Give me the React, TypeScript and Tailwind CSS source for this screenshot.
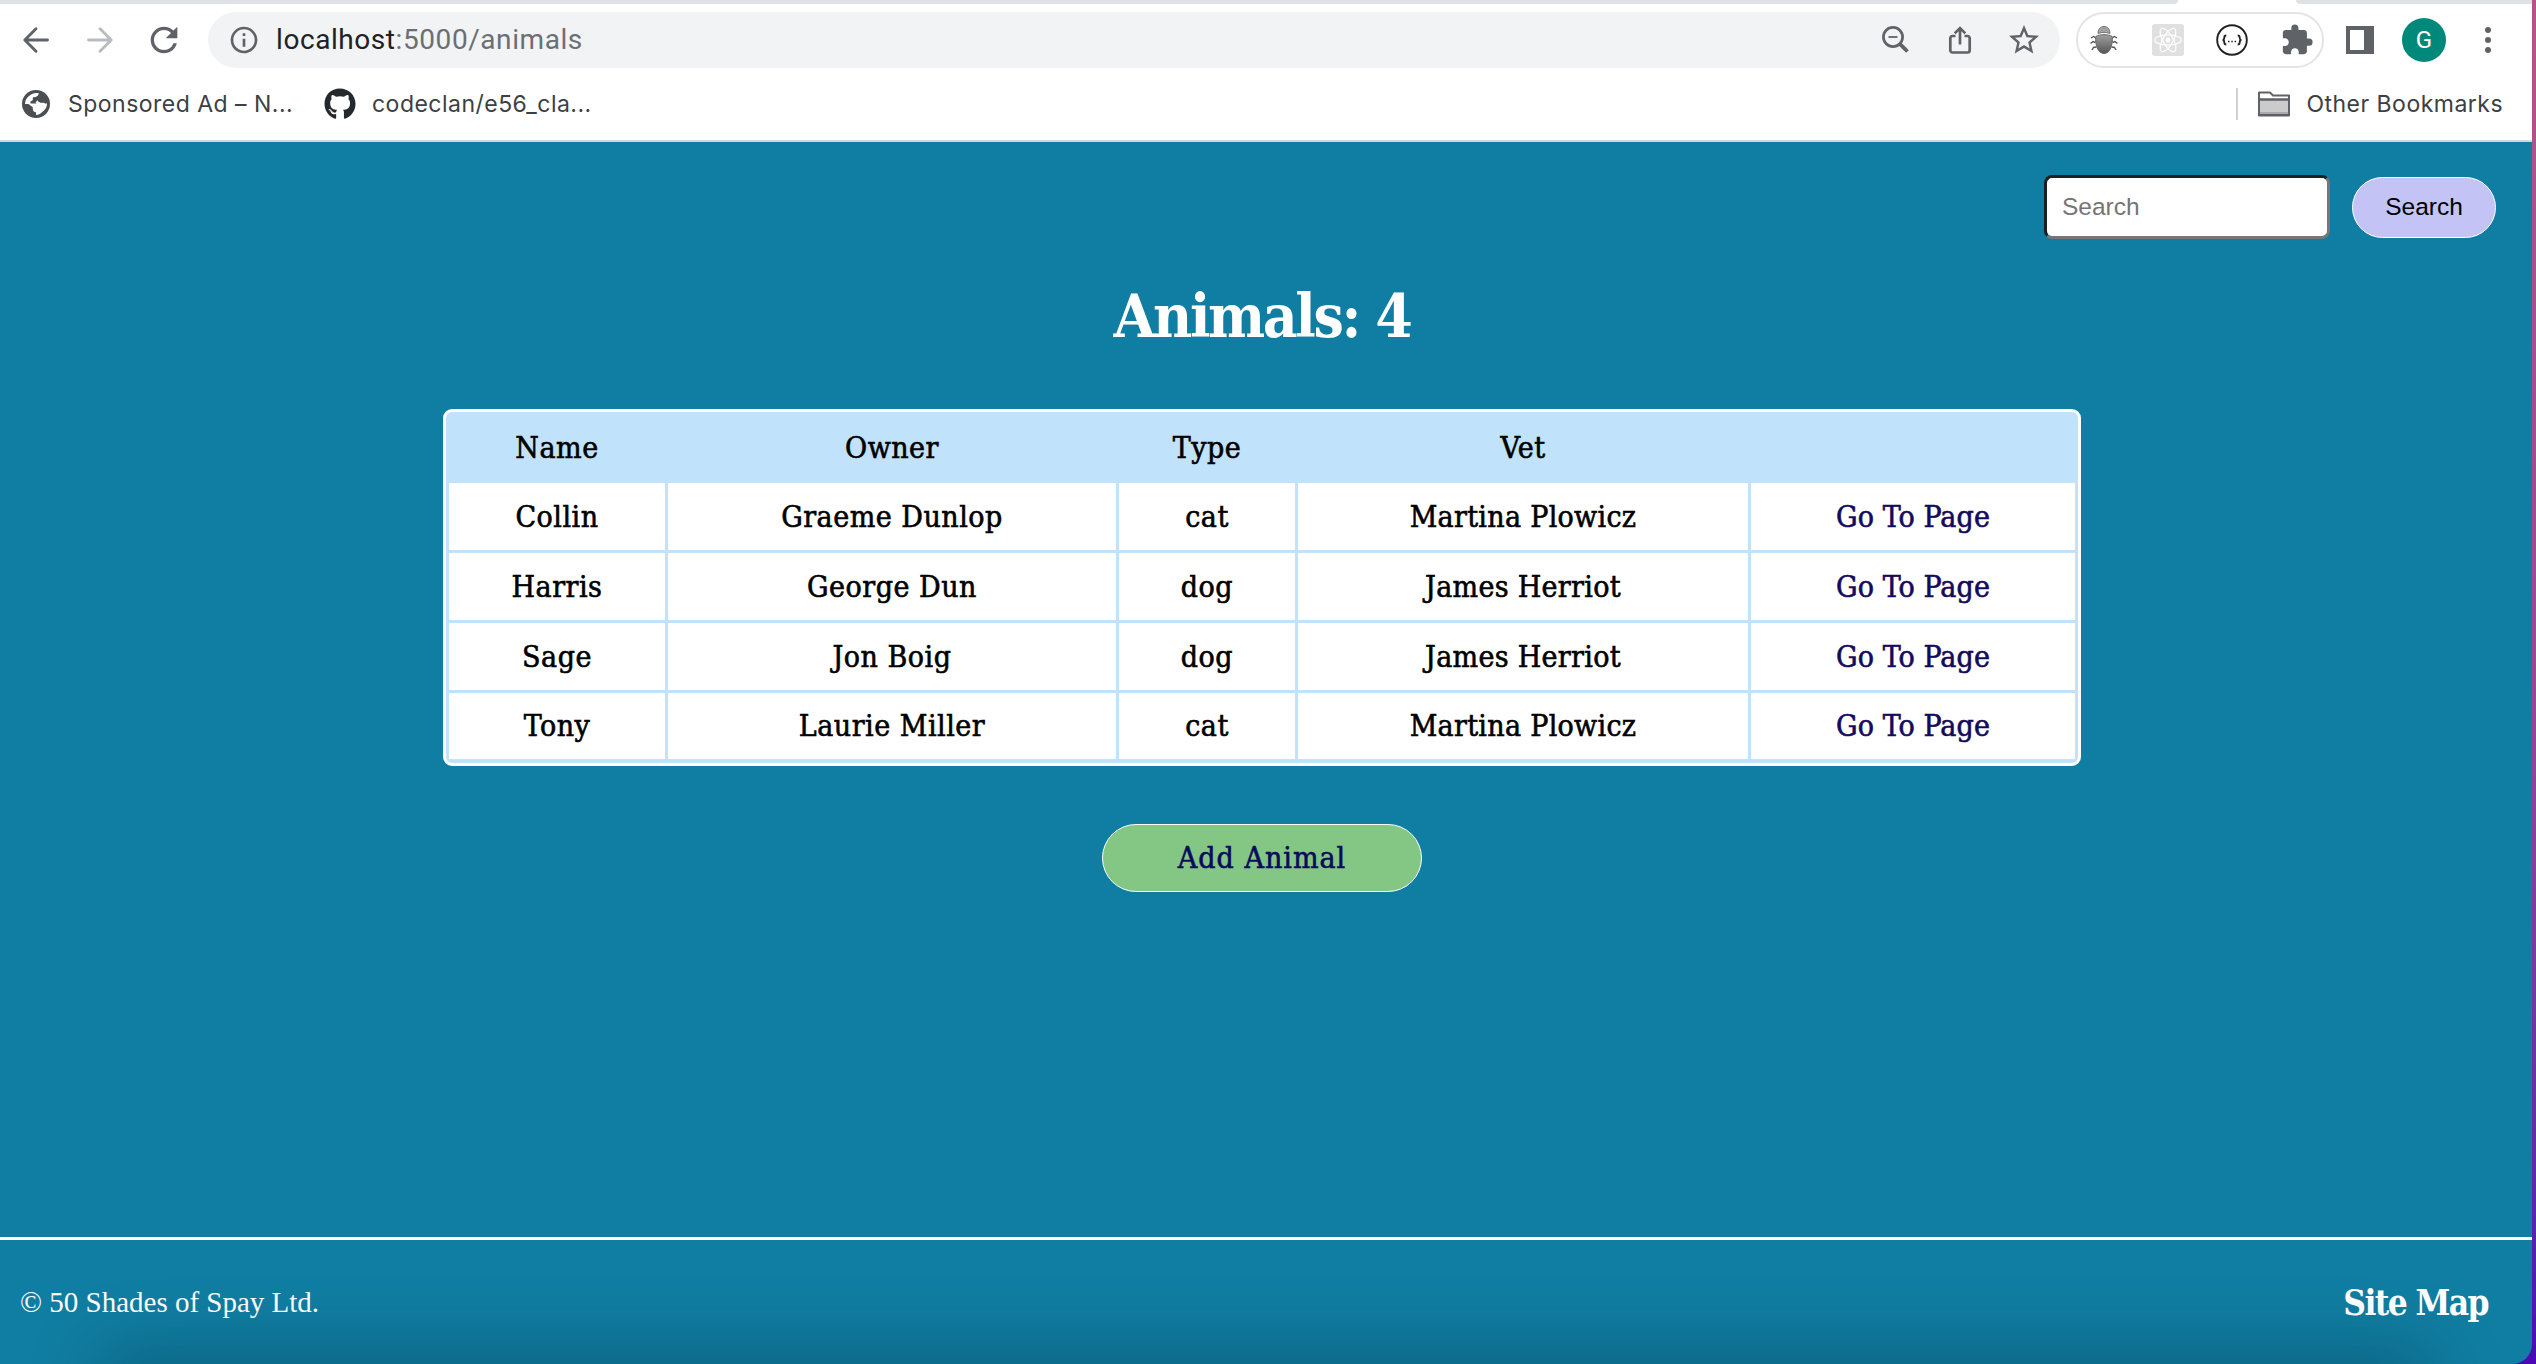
import { MdExtension, MdInfoOutline, MdRefresh, MdStarBorder } from 'react-icons/md';
import { FaGithub, FaReact } from 'react-icons/fa';

type Animal = { name: string; owner: string; type: string; vet: string };

const animals: Animal[] = [
  { name: 'Collin', owner: 'Graeme Dunlop', type: 'cat', vet: 'Martina Plowicz' },
  { name: 'Harris', owner: 'George Dun', type: 'dog', vet: 'James Herriot' },
  { name: 'Sage', owner: 'Jon Boig', type: 'dog', vet: 'James Herriot' },
  { name: 'Tony', owner: 'Laurie Miller', type: 'cat', vet: 'Martina Plowicz' },
];

const slab = "font-['DejaVu_Serif_Condensed','DejaVu_Serif',serif]";
const cellText = 'text-[30px] leading-none tracking-[0.5px] [-webkit-text-stroke:0.6px]';

function Arrow({ flip = false, color }: { flip?: boolean; color: string }) {
  return (
    <svg className={flip ? 'h-8 w-8 rotate-180' : 'h-8 w-8'} viewBox="0 0 32 32" fill="none" stroke={color} strokeWidth="2.9" strokeLinecap="round" strokeLinejoin="round">
      <path d="M27.5 16H5M16 4.8 4.8 16 16 27.2" />
    </svg>
  );
}

function GlobeIcon() {
  return (
    <svg className="h-7 w-7" viewBox="0 0 28 28">
      <circle cx="14" cy="14" r="14" fill="#4b4f53" />
      <path fill="#fff" d="M3 14C3.200 8.200 8 3.600 14.500 3.100L16.800 3.300C16.600 5.800 15.500 7 13.500 7.100L11 7.300C10.600 8.800 11.200 9.500 10.400 10.400L8.400 11.400L8.500 13.500H15.200C17 13.500 18 14.500 18 16.200V17.300C19.700 17.300 20.500 18.100 20.500 19.500V21.800C18.800 23.800 16.700 24.800 14 25V22.200C12 22.200 10.800 21 10.800 19V17.300L6.500 14Z" />
      <path fill="#fff" d="M20.500 21.800C23.500 19.500 25.200 16.600 25 12.900C24 13.700 22.600 13.500 21.700 12.600L19.500 12.800C17.600 12.800 16.200 11.800 15.500 10.300L13.500 12.500L17.500 17.500Z" />
      <path fill="#4b4f53" d="M17.200 4.500L24 9.500L25 12.800C24 13.700 22.600 13.500 21.700 12.500H19.300C17.300 12.500 16 11.200 16 9.400C16 8.200 15.200 7.300 14 7Z" />
    </svg>
  );
}

function ZoomOutIcon() {
  return (
    <svg className="h-8 w-8" viewBox="0 0 32 32" fill="none" stroke="#5f6368">
      <circle cx="13" cy="13" r="9.600" strokeWidth="2.700" />
      <path d="M8.500 13h9" strokeWidth="1.800" />
      <path d="M19.800 19.800l7.700 7.700" strokeWidth="3.800" />
    </svg>
  );
}

function ShareIcon() {
  return (
    <svg className="h-8 w-8" viewBox="0 0 32 32" fill="none" stroke="#5f6368" strokeWidth="2.700">
      <path d="M11.500 12H8.500a2.200 2.200 0 0 0-2.200 2.200v12.100a2.200 2.200 0 0 0 2.200 2.200h15a2.200 2.200 0 0 0 2.200-2.200V14.200a2.200 2.200 0 0 0-2.200-2.200h-3" />
      <path d="M16 20.500V5M10.700 9.400 16 4.100l5.300 5.300" />
    </svg>
  );
}

function BugIcon() {
  return (
    <svg className="h-8 w-8" viewBox="0 0 32 32">
      <defs>
        <linearGradient id="bug-shell" x1="0" y1="0" x2="0" y2="1">
          <stop offset="0" stopColor="#a0a0a0" />
          <stop offset="1" stopColor="#555" />
        </linearGradient>
      </defs>
      <path d="M8 14l-2.500-1.500L3 14M7.500 18.500l-2.500-1L2.500 19.500M8.500 23l-3 .5L4 26M24 14l2.500-1.500L29 14M24.500 18.500l2.500-1 2.500 2M23.500 23l3 .5L28 26" fill="none" stroke="#555" strokeWidth="1.400" />
      <path d="M10 9.500C10 5 12.500 2.500 16 2.500s6 2.500 6 7c-4-1.500-8-1.500-12 0Z" fill="#a2a2a2" stroke="#777" />
      <path d="M7.800 12.500C12 10 20 10 24.200 12.500 25 20 22.500 29.500 16 29.500S7 20 7.800 12.500Z" fill="url(#bug-shell)" stroke="#666" />
    </svg>
  );
}

function BracesIcon() {
  return (
    <svg className="h-8 w-8" viewBox="0 0 32 32" fill="none" stroke="#222">
      <circle cx="16" cy="16" r="14.800" strokeWidth="1.900" />
      <path d="M10.300 11.500c-2 0-2 .7-2 2 0 1.600-.4 2.300-1.600 2.500 1.200.2 1.600.9 1.600 2.500 0 1.300 0 2 2 2M21.700 11.500c2 0 2 .7 2 2 0 1.600.4 2.300 1.600 2.500-1.200.2-1.600.9-1.600 2.500 0 1.300 0 2-2 2" strokeWidth="1.800" />
      <path d="M12 17.500h1.500M15.300 17.500h1.500M18.600 17.500h1.500" strokeWidth="1.500" />
    </svg>
  );
}

function FolderIcon() {
  return (
    <svg className="h-8 w-8" viewBox="0 0 32 32" stroke="#5f6368" strokeWidth="2" strokeLinejoin="round">
      <path d="M1 27V4.500h11l3 3h16V27Z" fill="#fff" />
      <path d="M1 11.500h30V27H1Z" fill="#cbcbcb" />
      <path d="M2 25h28" stroke="#aaa" />
      <path d="M1 11.500h30V27.500H1Z" fill="none" />
    </svg>
  );
}

function BrowserChrome() {
  return (
    <header className="h-[142px] w-full shrink-0 border-b-2 border-[#d5d8dc] bg-white font-[Inter,sans-serif]">
      <div className="flex h-1 justify-between">
        <div className="w-[2178px] rounded-br-[4px] bg-[#dee1e6]" />
        <div className="w-[236px] rounded-bl-[4px] bg-[#dee1e6]" />
      </div>
      <div className="flex h-[72px] items-center">
        <nav className="flex w-[208px] items-center gap-8 pl-5">
          <Arrow color="#5f6368" />
          <Arrow color="#b9bbbe" flip />
          <MdRefresh className="-ml-1 h-10 w-10 text-[#5f6368]" />
        </nav>
        <div className="flex h-14 w-[1852px] items-center rounded-full bg-[#f1f3f4] pr-5 pl-5">
          <MdInfoOutline className="h-8 w-8 text-[#5f6368]" />
          <span className="ml-4 flex-1 font-[Roboto,sans-serif] text-[28px] tracking-[0.57px] text-[#202124]">
            localhost<span className="text-[#6b6f74]">:5000/animals</span>
          </span>
          <div className="flex items-center gap-8">
            <ZoomOutIcon />
            <ShareIcon />
            <MdStarBorder className="-mx-0.5 h-9 w-9 text-[#5f6368]" />
          </div>
        </div>
        <div className="ml-4 flex h-14 w-[248px] items-center justify-between rounded-full border-2 border-[#e3e4e6] pr-2 pl-2.5">
          <BugIcon />
          <div className="flex h-8 w-8 items-center justify-center rounded-[3px] bg-[#e0e0e0]">
            <FaReact className="h-7 w-7 text-white" />
          </div>
          <BracesIcon />
          <MdExtension className="h-[34px] w-[34px] text-[#5f6368]" />
        </div>
        <div className="ml-[22px] h-7 w-7 border-4 border-r-[10px] border-[#5f6368] bg-white" />
        <div className="ml-7 flex h-11 w-11 items-center justify-center rounded-full bg-[#00897b] font-[Roboto,sans-serif] text-[24px] text-white">G</div>
        <div className="ml-[39px] flex flex-col gap-1">
          <i className="h-1.5 w-1.5 rounded-full bg-[#5f6368]" />
          <i className="h-1.5 w-1.5 rounded-full bg-[#5f6368]" />
          <i className="h-1.5 w-1.5 rounded-full bg-[#5f6368]" />
        </div>
      </div>
      <div className="flex h-14 items-center pl-[22px] text-[23px] tracking-[0.48px] text-[#3c4043]">
        <GlobeIcon />
        <span className="ml-[18px] w-[256px]">Sponsored Ad – N...</span>
        <FaGithub className="h-8 w-8 text-[#24292e]" />
        <span className="ml-4">codeclan/e56_cla...</span>
        <div className="mr-[29px] ml-auto flex items-center">
          <i className="h-8 w-0.5 bg-[#cfd1d4]" />
          <span className="mr-4 ml-5"><FolderIcon /></span>
          <span>Other Bookmarks</span>
        </div>
      </div>
    </header>
  );
}

function AnimalTable() {
  return (
    <div className={`${slab} ${cellText} mt-[51px] w-[1638px] rounded-[9px] border-3 border-white bg-[#c1e2fb] px-[3px] pb-1 text-center text-black`}>
      <div className="grid h-[71px] grid-cols-[216px_448px_176px_450px_324px] items-center gap-x-[3px]">
        <span>Name</span>
        <span>Owner</span>
        <span>Type</span>
        <span>Vet</span>
        <span />
      </div>
      <div className="grid grid-cols-[216px_448px_176px_450px_324px] grid-rows-[67px_67px_67px_66px] gap-[3px]">
        {animals.map((a) => (
          <div key={a.name} className="contents">
            <span className="flex items-center justify-center bg-white">{a.name}</span>
            <span className="flex items-center justify-center bg-white">{a.owner}</span>
            <span className="flex items-center justify-center bg-white">{a.type}</span>
            <span className="flex items-center justify-center bg-white tracking-[0.3px]">{a.vet}</span>
            <a className="flex items-center justify-center bg-white tracking-[0.1px] text-[#140a5c]">Go To Page</a>
          </div>
        ))}
      </div>
    </div>
  );
}

export default function App() {
  return (
    <div className="h-[1364px] w-[2536px] overflow-hidden bg-linear-to-b from-[#b5538c] via-[#a0468f] to-[#4a08b4] pr-1">
      <div className="relative flex h-full flex-col overflow-hidden rounded-br-[20px] bg-[#107ea2]">
        <BrowserChrome />
        <main className="flex flex-1 flex-col items-center pr-2">
          <form className="mt-[33px] flex items-center self-end pr-7 font-['Liberation_Sans',sans-serif] text-[24.500px]">
            <input
              className="h-16 w-[286px] rounded-lg border-3 border-t-[#1c1f21] border-r-[#767676] border-b-[#767676] border-l-[#1c1f21] bg-white px-[15px] outline-none placeholder:text-[#757575]"
              placeholder="Search"
            />
            <button type="button" className="ml-[22px] h-[61px] w-36 rounded-full border border-white bg-[#c3c3f5] text-black">Search</button>
          </form>
          <h1 className={`${slab} mt-[41px] h-[78px] text-[60px] leading-[72px] font-bold tracking-[-2.4px] text-white`}>Animals: 4</h1>
          <AnimalTable />
          <button type="button" className={`${slab} mt-[58px] h-[68px] w-80 rounded-full border border-white bg-[#84c784] text-[30px] leading-[62px] tracking-[1px] text-[#0a0a5c] [-webkit-text-stroke:0.6px]`}>
            Add Animal
          </button>
        </main>
        <footer className="flex h-[127px] items-center justify-between border-t-3 border-white pr-11 pl-5 text-white">
          <span className="pt-0.5 font-['Liberation_Serif',serif] text-[29px]">© 50 Shades of Spay Ltd.</span>
          <a className={`${slab} pt-0.5 text-[35px] font-bold tracking-[-1.6px]`}>Site Map</a>
        </footer>
        <div className="absolute top-full right-28 left-28 h-10 shadow-[0_0_70px_12px_rgba(0,30,50,0.300)]" />
      </div>
    </div>
  );
}
